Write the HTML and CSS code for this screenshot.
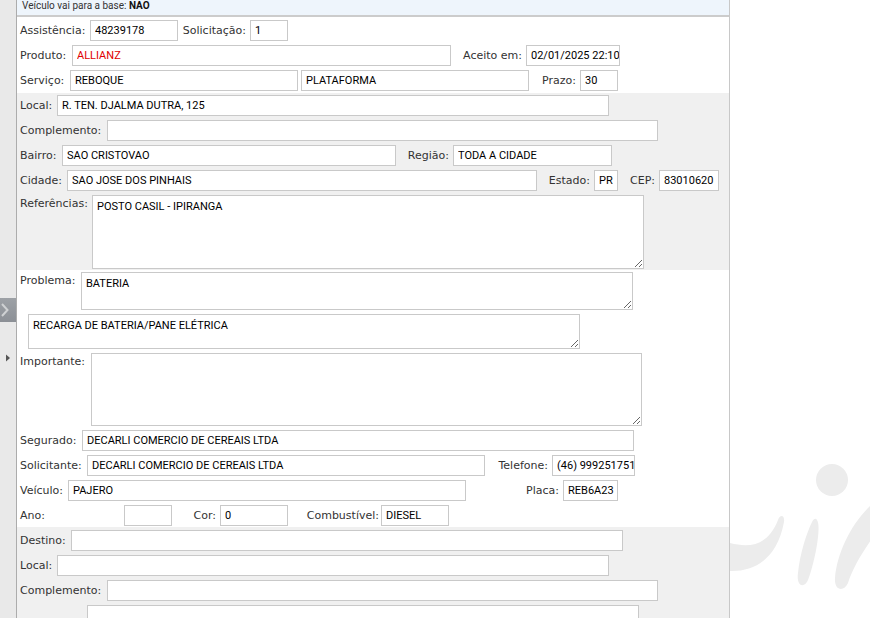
FILE: index.html
```html
<!DOCTYPE html>
<html lang="pt-BR">
<head>
<meta charset="utf-8">
<title>Assistência</title>
<link rel="stylesheet" href="styles.css">
</head>
<body>
<aside class="sidebar">
  <div class="side-btn">
    <svg width="16" height="24" viewBox="0 0 16 24"><path d="M2 6 L7.5 12 L2 18" fill="none" stroke="#cfd1d3" stroke-width="2"/></svg>
  </div>
  <div class="side-arrow">
    <svg width="16" height="10" viewBox="0 0 16 10"><path d="M6 1.5 L10 5 L6 8.5 Z" fill="#555"/></svg>
  </div>
</aside>

<main class="panel">
  <div class="topbar">Veículo vai para a base: <b>NÃO</b></div>

  <section class="sec white s1">
    <div class="row">
      <label class="lbl w70">Assistência:</label><input class="inp w88" value="48239178">
      <label class="lbl r w72">Solicitação:</label><input class="inp w38" value="1">
    </div>
    <div class="row">
      <label class="lbl w52">Produto:</label><input class="inp w379 red" value="ALLIANZ">
      <label class="lbl r w75">Aceito em:</label><input class="inp w94" value="02/01/2025 22:10">
    </div>
    <div class="row">
      <label class="lbl w50">Serviço:</label><input class="inp w228" value="REBOQUE">
      <span class="sp3"></span><input class="inp w228" value="PLATAFORMA">
      <label class="lbl r w51">Prazo:</label><input class="inp w38" value="30">
    </div>
  </section>

  <section class="sec gray s2">
    <div class="row">
      <label class="lbl w37">Local:</label><input class="inp w552" value="R. TEN. DJALMA DUTRA, 125">
    </div>
    <div class="row">
      <label class="lbl w87">Complemento:</label><input class="inp w551" value="">
    </div>
    <div class="row">
      <label class="lbl w42">Bairro:</label><input class="inp w334" value="SAO CRISTOVAO">
      <label class="lbl r w57">Região:</label><input class="inp w159" value="TODA A CIDADE">
    </div>
    <div class="row">
      <label class="lbl w47">Cidade:</label><input class="inp w470" value="SAO JOSE DOS PINHAIS">
      <label class="lbl r w57">Estado:</label><input class="inp w24" value="PR">
      <label class="lbl r w41">CEP:</label><input class="inp w60" value="83010620">
    </div>
    <div class="row top">
      <label class="lbl w72 pt">Referências:</label><textarea class="ta w552 h74">POSTO CASIL - IPIRANGA</textarea>
    </div>
  </section>

  <section class="sec white s3">
    <div class="row top">
      <label class="lbl w61 pt">Problema:</label><textarea class="ta w552 h38">BATERIA</textarea>
    </div>
    <div class="row top">
      <span class="sp8"></span><textarea class="ta w552 h35">RECARGA DE BATERIA/PANE ELÉTRICA</textarea>
    </div>
    <div class="row top">
      <label class="lbl w71 pt">Importante:</label><textarea class="ta w551 h73"></textarea>
    </div>
    <div class="row">
      <label class="lbl w62">Segurado:</label><input class="inp w552" value="DECARLI COMERCIO DE CEREAIS LTDA">
    </div>
    <div class="row">
      <label class="lbl w67">Solicitante:</label><input class="inp w398" value="DECARLI COMERCIO DE CEREAIS LTDA">
      <label class="lbl r w67">Telefone:</label><input class="inp w83" value="(46) 999251751">
    </div>
    <div class="row">
      <label class="lbl w48">Veículo:</label><input class="inp w398" value="PAJERO">
      <label class="lbl r w97">Placa:</label><input class="inp w55" value="REB6A23">
    </div>
    <div class="row">
      <label class="lbl w104">Ano:</label><input class="inp w48" value="">
      <label class="lbl r w48">Cor:</label><input class="inp w68" value="0">
      <label class="lbl r w93 tight">Combustível:</label><input class="inp w68" value="DIESEL">
    </div>
  </section>

  <section class="sec gray s4">
    <div class="row">
      <label class="lbl w51">Destino:</label><input class="inp w552" value="">
    </div>
    <div class="row">
      <label class="lbl w37">Local:</label><input class="inp w552" value="">
    </div>
    <div class="row">
      <label class="lbl w87">Complemento:</label><input class="inp w551" value="">
    </div>
    <div class="row top">
      <label class="lbl w67 pt"></label><textarea class="ta w552 h60"></textarea>
    </div>
  </section>
</main>

<div class="outside">
  <svg class="mark" width="141" height="178" viewBox="729 440 141 178">
    <circle cx="831" cy="480" r="16" fill="#ececec"/>
    <path d="M729 571 C 752 572, 776 560, 783 522 C 784 515, 779 514, 777 520 C 768 543, 752 549, 729 543 Z" fill="#ececec"/>
    <path d="M816 520 C 821 527, 813 565, 807 580 C 803 589, 795 586, 797 573 C 799 553, 806 532, 811 522 C 813 518, 815 518, 816 520 Z" fill="#ececec"/>
    <path d="M870 505 L870 540 C 859 556, 851 570, 847 583 C 843 592, 833 591, 834 578 C 836 553, 850 524, 870 505 Z" fill="#ececec"/>
  </svg>
</div>
</body>
</html>
```

FILE: styles.css
```css
* { box-sizing: border-box; }

html, body {
  margin: 0;
  padding: 0;
  background: #ffffff;
}

body {
  display: flex;
  height: 618px;
  overflow: hidden;
  font-family: "DejaVu Sans", Verdana, sans-serif;
  font-size: 11px;
  color: #333333;
}

.sidebar {
  width: 17px;
  flex: none;
  background: #e9e9e9;
  border-right: 1px solid #acacac;
  display: flex;
  flex-direction: column;
}

.side-btn {
  margin-top: 298px;
  height: 24px;
  width: 16px;
  flex: none;
  background: linear-gradient(#9da1a6, #8c9096);
  display: flex;
}

.side-arrow {
  margin-top: 31px;
  height: 10px;
  flex: none;
  display: flex;
}

.panel {
  width: 713px;
  flex: none;
  border-right: 1px solid #c8c8c8;
  display: flex;
  flex-direction: column;
  background: #ffffff;
}

.topbar {
  flex: none;
  height: 17px;
  background: #eef5fc;
  border-bottom: 2px solid #cccccc;
  font-family: Roboto, "Liberation Sans", sans-serif;
  font-size: 10px;
  line-height: 11px;
  padding-left: 5px;
  color: #333333;
}

.topbar b { color: #111111; }

.sec {
  flex: none;
  display: flex;
  flex-direction: column;
  gap: 4px;
  padding-left: 3px;
}

.white { background: #ffffff; }
.gray { background: #f0f0f0; }

.s1 { padding-top: 3px; padding-bottom: 2px; }
.s2 { padding-top: 2px; padding-bottom: 1px; }
.s3 { padding-top: 2px; padding-bottom: 1px; }
.s4 { padding-top: 3px; flex: 1 0 auto; }

.row {
  flex: none;
  display: flex;
  align-items: center;
  height: 21px;
}

.row.top {
  align-items: flex-start;
  height: auto;
}

.lbl {
  flex: none;
  white-space: nowrap;
  color: #333333;
  line-height: 13px;
}

.lbl.r {
  text-align: right;
  padding-right: 4px;
}

.lbl.tight { padding-right: 2px; }

.lbl.pt { padding-top: 2px; }

.inp, .ta {
  flex: none;
  height: 21px;
  border: 1px solid #c9c9c9;
  background: #ffffff;
  font-family: Roboto, "Liberation Sans", sans-serif;
  font-size: 11px;
  color: #000000;
  padding: 0 0 0 4px;
  margin: 0;
  border-radius: 0;
  outline: none;
}

.ta {
  padding: 4px 4px;
  line-height: 14px;
  resize: both;
}

.red { color: #e00000; }

.sp3 { width: 3px; flex: none; }
.sp8 { width: 8px; flex: none; }

.w24 { width: 24px; }
.w37 { width: 37px; }
.w38 { width: 38px; }
.w41 { width: 41px; }
.w42 { width: 42px; }
.w47 { width: 47px; }
.w48 { width: 48px; }
.w50 { width: 50px; }
.w51 { width: 51px; }
.w52 { width: 52px; }
.w55 { width: 55px; }
.w57 { width: 57px; }
.w60 { width: 60px; }
.w61 { width: 61px; }
.w62 { width: 62px; }
.w67 { width: 67px; }
.w68 { width: 68px; }
.w70 { width: 70px; }
.w71 { width: 71px; }
.w72 { width: 72px; }
.w75 { width: 75px; }
.w83 { width: 83px; }
.w87 { width: 87px; }
.w88 { width: 88px; }
.w93 { width: 93px; }
.w94 { width: 94px; }
.w97 { width: 97px; }
.w104 { width: 104px; }
.w159 { width: 159px; }
.w228 { width: 228px; }
.w334 { width: 334px; }
.w379 { width: 379px; }
.w398 { width: 398px; }
.w470 { width: 470px; }
.w551 { width: 551px; }
.w552 { width: 552px; }

.h35 { height: 35px; }
.h38 { height: 38px; }
.h60 { height: 60px; }
.h73 { height: 73px; }
.h74 { height: 74px; }

.outside {
  flex: 1;
  position: relative;
  background: #ffffff;
}

.mark {
  position: absolute;
  left: 0;
  top: 440px;
}
```
